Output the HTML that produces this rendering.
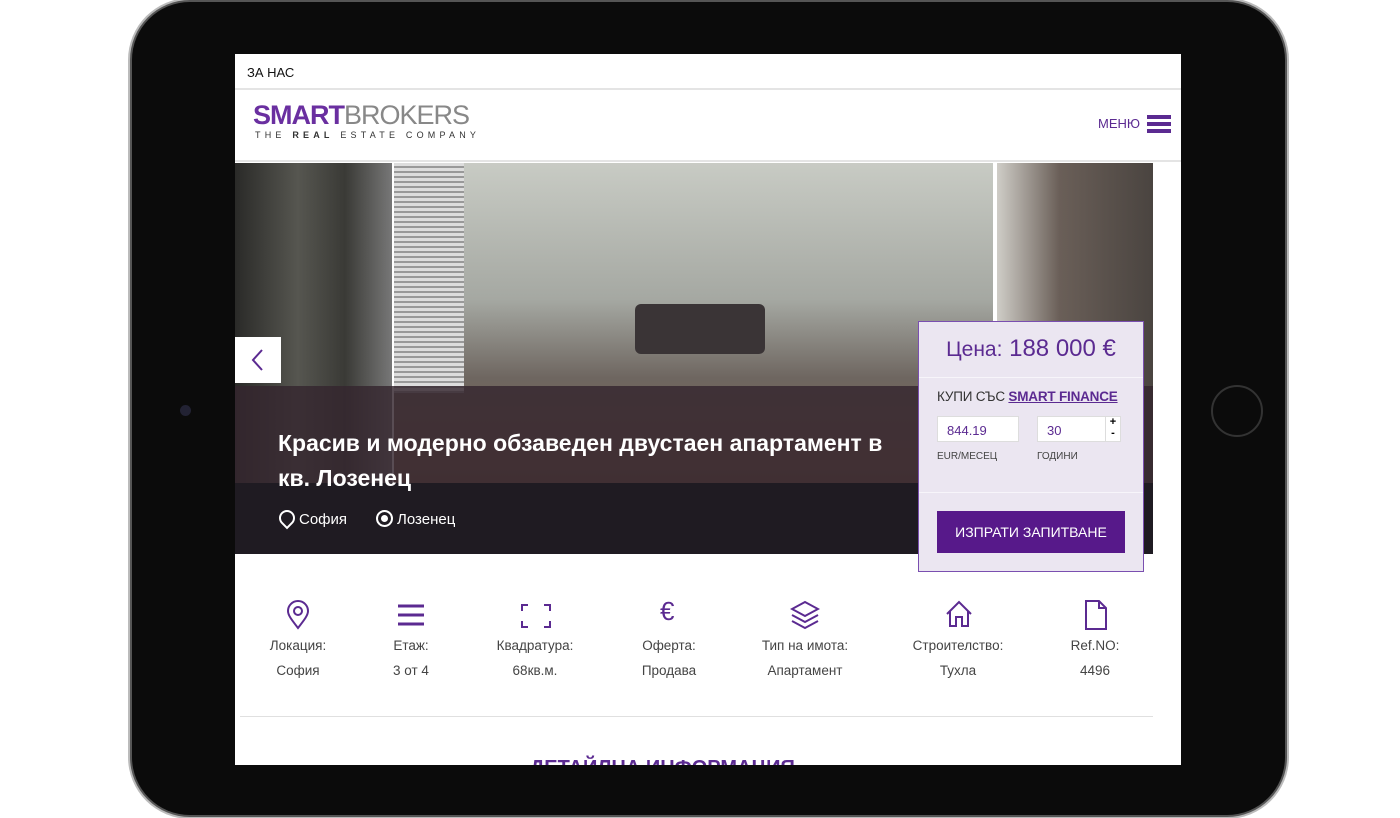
<!DOCTYPE html>
<html><head><meta charset="utf-8"><style>
*{margin:0;padding:0;box-sizing:border-box}
body{width:1400px;height:818px;background:#fff;position:relative;overflow:hidden;font-family:"Liberation Sans",sans-serif}
.frame{position:absolute;left:132px;top:2px;width:1153px;height:813px;background:#0b0b0b;border-radius:58px;box-shadow:0 0 0 2px #555, 0 0 0 4px #bbb}
.screen{position:absolute;left:235px;top:54px;width:946px;height:711px;background:#fff;overflow:hidden}
.abs{position:absolute}
.purple{color:#5b2a91}
</style></head><body>
<div class="frame"></div>
<div class="abs" style="left:1211px;top:385px;width:52px;height:52px;border-radius:50%;border:2px solid #333"></div>
<div class="abs" style="left:180px;top:405px;width:11px;height:11px;border-radius:50%;background:#223"></div>
<div class="screen">
 <div class="abs" style="left:12px;top:11px;font-size:13px;color:#111">ЗА НАС</div>
 <div class="abs" style="left:0;top:34px;width:946px;height:2px;background:#e4e4e4"></div>
 <div class="abs" style="left:18px;top:46px;font-size:27px;line-height:30px;letter-spacing:-1px"><b style="color:#6a2fa0">SMART</b><span style="color:#888;font-weight:normal">BROKERS</span></div>
 <div class="abs" style="left:20px;top:76px;font-size:9px;letter-spacing:4.2px;color:#333">THE <b>REAL</b> ESTATE COMPANY</div>
 <div class="abs purple" style="left:863px;top:62px;font-size:13px">МЕНЮ</div>
 <div class="abs" style="left:912px;top:61px;width:24px;height:4px;background:#5b2a91;box-shadow:0 7px 0 #5b2a91,0 14px 0 #5b2a91"></div>
 <div class="abs" style="left:0;top:106px;width:946px;height:2px;background:#e4e4e4"></div>
 <div class="abs" style="left:0;top:109px;width:157px;height:391px;background:linear-gradient(90deg,#2a2a28,#565650 40%,#3a3a36 70%,#777 100%)"></div>
 <div class="abs" style="left:159px;top:109px;width:599px;height:391px;background:linear-gradient(180deg,#c8cbc4 0%,#a5a8a2 35%,#6e6660 55%,#7a6050 75%,#6a4e3c 100%)"></div>
 <div class="abs" style="left:159px;top:109px;width:70px;height:230px;background:repeating-linear-gradient(180deg,#ddd 0 3px,#999 3px 5px)"></div>
 <div class="abs" style="left:400px;top:250px;width:130px;height:50px;background:#3a3436;border-radius:6px"></div>
 <div class="abs" style="left:762px;top:109px;width:156px;height:391px;background:linear-gradient(90deg,#cfcdc7,#6a5f58 40%,#4a4440 100%)"></div>
 <div class="abs" style="left:0;top:332px;width:918px;height:97px;background:rgba(52,38,46,.82)"></div>
 <div class="abs" style="left:0;top:429px;width:918px;height:71px;background:#1f1b22"></div>
 <div class="abs" style="left:0;top:283px;width:46px;height:46px;background:#fff"></div>
 <svg class="abs" style="left:15px;top:294px" width="16" height="24"><path d="M12 2L3 12l9 10" fill="none" stroke="#5b2a91" stroke-width="2"/></svg>
 <div class="abs" style="left:43px;top:372px;font-size:23px;font-weight:bold;color:#fff;line-height:35px;width:630px">Красив и модерно обзаведен двустаен апартамент в кв. Лозенец</div>
 <div class="abs" style="left:44px;top:456px;font-size:15px;color:#fff"><span style="display:inline-block;width:16px;height:16px;border:2px solid #fff;border-radius:50% 50% 50% 0;transform:rotate(-45deg);vertical-align:-2px;margin-right:4px"></span>София</div>
 <div class="abs" style="left:141px;top:456px;font-size:15px;color:#fff"><span style="display:inline-block;width:17px;height:17px;border:2px solid #fff;border-radius:50%;vertical-align:-3px;margin-right:4px;box-shadow:inset 0 0 0 3px #1f1b22,inset 0 0 0 7px #fff"></span>Лозенец</div>
 <div class="abs" style="left:683px;top:267px;width:226px;height:251px;background:#ebe6f1;border:1px solid #7a4fb0">
  <div class="abs purple" style="left:0;width:224px;top:13px;text-align:center;font-size:24px"><span style="font-size:21px">Цена:</span> 188 000 €</div>
  <div class="abs" style="left:0;top:55px;width:224px;height:1px;background:#f7f5fa"></div>
  <div class="abs" style="left:18px;top:67px;font-size:13.5px;color:#333;letter-spacing:-.2px">КУПИ СЪС <b class="purple" style="text-decoration:underline">SMART FINANCE</b></div>
  <div class="abs purple" style="left:18px;top:94px;width:82px;height:26px;background:#fff;border:1px solid #ddd;font-size:13px;padding:6px 9px">844.19</div>
  <div class="abs purple" style="left:118px;top:94px;width:84px;height:26px;background:#fff;border:1px solid #ddd;font-size:13px;padding:6px 9px">30</div>
  <div class="abs" style="left:186px;top:95px;width:15px;height:24px;border-left:1px solid #ddd;font-size:11px;text-align:center;line-height:11px;font-weight:bold">+<br>-</div>
  <div class="abs" style="left:18px;top:129px;font-size:10px;color:#444">EUR/МЕСЕЦ</div>
  <div class="abs" style="left:118px;top:129px;font-size:10px;color:#444">ГОДИНИ</div>
  <div class="abs" style="left:0;top:170px;width:224px;height:1px;background:#f7f5fa"></div>
  <div class="abs" style="left:18px;top:189px;width:188px;height:42px;background:#57198a;color:#fff;font-size:14px;text-align:center;line-height:42px">ИЗПРАТИ ЗАПИТВАНЕ</div>
 </div>
 <div class="abs" style="left:0;top:546px;width:946px;font-size:13.5px;color:#444;text-align:center">
  <svg class="abs" style="left:50px" width="26" height="30" viewBox="0 0 26 30"><path d="M13 28C6 19 3 15 3 11a10 10 0 0 1 20 0c0 4-3 8-10 17z" fill="none" stroke="#5b2a91" stroke-width="2"/><circle cx="13" cy="11" r="4" fill="none" stroke="#5b2a91" stroke-width="2"/></svg>
  <svg class="abs" style="left:163px;top:4px" width="26" height="22"><path d="M0 2h26M0 11h26M0 20h26" stroke="#5b2a91" stroke-width="3"/></svg>
  <svg class="abs" style="left:286px;top:4px" width="30" height="24"><path d="M1 7V1h6M23 1h6v6M1 17v6h6M23 23h6v-6" fill="none" stroke="#5b2a91" stroke-width="2"/></svg>
  <div class="abs purple" style="left:425px;top:-4px;font-size:26px">€</div>
  <svg class="abs" style="left:555px;top:0" width="30" height="30"><path d="M15 2L2 9l13 7 13-7zM2 15l13 7 13-7M2 21l13 7 13-7" fill="none" stroke="#5b2a91" stroke-width="2"/></svg>
  <svg class="abs" style="left:710px;top:0" width="28" height="28"><path d="M2 14L14 2l12 12M5 11v15h6v-9h6v9h6V11" fill="none" stroke="#5b2a91" stroke-width="2"/></svg>
  <svg class="abs" style="left:850px;top:0" width="22" height="30"><path d="M1 1h13l7 7v21H1zM14 1v7h7" fill="none" stroke="#5b2a91" stroke-width="2"/></svg>
  <div class="abs" style="left:13px;width:100px;top:33px;line-height:25px">Локация:<br>София</div>
  <div class="abs" style="left:126px;width:100px;top:33px;line-height:25px">Етаж:<br>3 от 4</div>
  <div class="abs" style="left:250px;width:100px;top:33px;line-height:25px">Квадратура:<br>68кв.м.</div>
  <div class="abs" style="left:384px;width:100px;top:33px;line-height:25px">Оферта:<br>Продава</div>
  <div class="abs" style="left:510px;width:120px;top:33px;line-height:25px">Тип на имота:<br>Апартамент</div>
  <div class="abs" style="left:663px;width:120px;top:33px;line-height:25px">Строителство:<br>Тухла</div>
  <div class="abs" style="left:810px;width:100px;top:33px;line-height:25px">Ref.NO:<br>4496</div>
 </div>
 <div class="abs" style="left:5px;top:662px;width:913px;height:1px;background:#e0e0e0"></div>
 <div class="abs purple" style="left:295px;top:703px;font-size:20px;font-weight:bold">ДЕТАЙЛНА ИНФОРМАЦИЯ</div>
</div>
</body></html>
